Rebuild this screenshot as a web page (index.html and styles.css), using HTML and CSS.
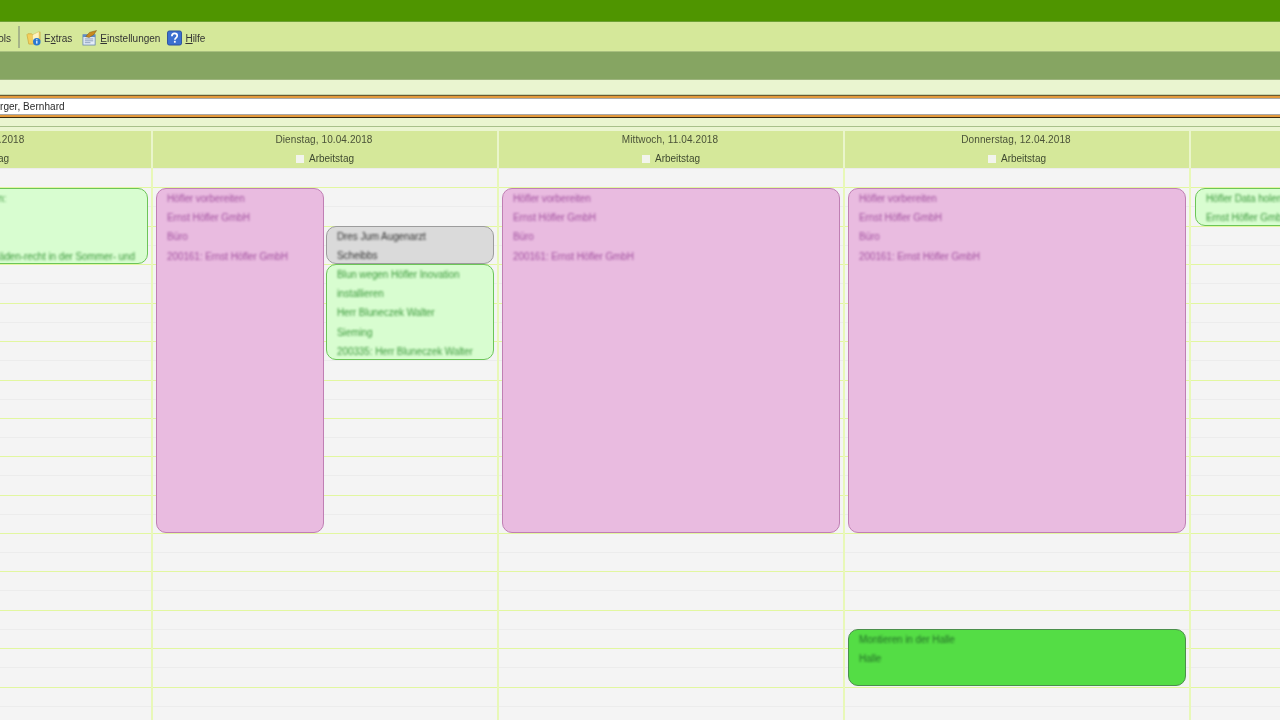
FILE: index.html
```html
<!DOCTYPE html>
<html lang="de">
<head>
<meta charset="utf-8">
<title>Kalender</title>
<link rel="stylesheet" href="styles.css">
</head>
<body>
<div class="titlebar"></div>
<div class="toolbar">
  <span class="tb-clip"><span class="tb-label">Tools</span></span>
  <span class="tb-sep"></span>
  <span class="tb-item tb-extras">
    <svg class="tb-icon" viewBox="0 0 16 17"><path d="M1 5l1-1h4l1 1h2l6-3v9l-3 4H3z" fill="#f3cf5c" stroke="#c9a43a" stroke-width=".7"/><path d="M7 5l7-3.500V9l-7 3z" fill="#fdf3c0" stroke="#d8b850" stroke-width=".5"/><circle cx="11.500" cy="12.500" r="4" fill="#2a78d0"/><rect x="10.900" y="11.500" width="1.300" height="3" fill="#fff"/><rect x="10.900" y="9.800" width="1.300" height="1.100" fill="#fff"/></svg>
    <span class="tb-label">E<u>x</u>tras</span>
  </span>
  <span class="tb-item tb-settings">
    <svg class="tb-icon" viewBox="0 0 16 17"><rect x="1" y="5" width="13" height="11" fill="#e4edf8" stroke="#5d7fae" stroke-width=".8"/><rect x="1" y="5" width="13" height="2.500" fill="#5d8fc8"/><path d="M3 9.500h9M3 11.500h9M3 13.500h6" stroke="#7d93b3" stroke-width=".9"/><path d="M4 7l4-4.500 7.500-2-3 4.500-5 3z" fill="#c98a1e" stroke="#7d5410" stroke-width=".5"/></svg>
    <span class="tb-label"><u>E</u>instellungen</span>
  </span>
  <span class="tb-item tb-help">
    <svg class="tb-icon" viewBox="0 0 16 17"><rect x=".5" y="1" width="15" height="15" rx="2" fill="#3b6fd0" stroke="#2a4f9c"/><path d="M5.200 6.500c0-2 1.300-3 2.900-3s2.800 1 2.800 2.500c0 2.200-2.500 2.300-2.500 4.300" fill="none" stroke="#fff" stroke-width="1.800"/><rect x="7.400" y="11.500" width="1.900" height="2" fill="#fff"/></svg>
    <span class="tb-label"><u>H</u>ilfe</span>
  </span>
</div>
<div class="section-bar"></div>
<div class="pale-strip"></div>
<div class="resource">
  <div class="resource-name">rger, Bernhard</div>
</div>
<div class="pale-strip pale-strip-low"></div>
<div class="calendar">
  <section class="day day-first">
    <header class="day-head"><div class="day-date">Montag, 09.04.2018</div><div class="day-work"><span class="check"></span>Arbeitstag</div></header>
    <div class="day-body">
      <article class="event green ev-mon">
        <p>Höfler Garten: Wartung und Pflege planen:</p><p>&nbsp;</p><p>&nbsp;</p>
        <p>Höfler Halle + Tore: Wartung der Fensterläden-recht in der Sommer- und</p>
      </article>
    </div>
  </section>
  <section class="day">
    <header class="day-head"><div class="day-date">Dienstag, 10.04.2018</div><div class="day-work"><span class="check"></span>Arbeitstag</div></header>
    <div class="day-body">
      <article class="event pink ev-half-left ev-long"><p>Höfler vorbereiten</p><p>Ernst Höfler GmbH</p><p>Büro</p><p>200161: Ernst Höfler GmbH</p></article>
      <article class="event grey ev-dr"><p>Dres Jum Augenarzt</p><p>Scheibbs</p></article>
      <article class="event green ev-blun"><p>Blun wegen Höfler Inovation</p><p>installieren</p><p>Herr Bluneczek Walter</p><p>Sieming</p><p>200335: Herr Bluneczek Walter</p></article>
    </div>
  </section>
  <section class="day">
    <header class="day-head"><div class="day-date">Mittwoch, 11.04.2018</div><div class="day-work"><span class="check"></span>Arbeitstag</div></header>
    <div class="day-body">
      <article class="event pink ev-long ev-full"><p>Höfler vorbereiten</p><p>Ernst Höfler GmbH</p><p>Büro</p><p>200161: Ernst Höfler GmbH</p></article>
    </div>
  </section>
  <section class="day">
    <header class="day-head"><div class="day-date">Donnerstag, 12.04.2018</div><div class="day-work"><span class="check"></span>Arbeitstag</div></header>
    <div class="day-body">
      <article class="event pink ev-long ev-full"><p>Höfler vorbereiten</p><p>Ernst Höfler GmbH</p><p>Büro</p><p>200161: Ernst Höfler GmbH</p></article>
      <article class="event strong ev-full ev-halle"><p>Montieren in der Halle</p><p>Halle</p></article>
    </div>
  </section>
  <section class="day day-last">
    <header class="day-head"></header>
    <div class="day-body">
      <article class="event green ev-fri"><p>Höfler Data holen</p><p>Ernst Höfler GmbH</p></article>
    </div>
  </section>
</div>
</body>
</html>
```
FILE: styles.css
```css
* { box-sizing: border-box; }
html, body { margin: 0; height: 100%; }
body {
  width: 1280px; height: 720px; overflow: hidden; background: #f4f4f4;
  font-family: "Liberation Sans", Arial, sans-serif; font-size: 10px; color: #333;
  display: flex; flex-direction: column;
}
p { margin: 0; }
.titlebar { height: 22px; background: #4f9500; border-bottom: 1px solid #6da034; flex: none; }
.toolbar {
  height: 30px; flex: none; background: #d5e89a; border-bottom: 1px solid #a9c07f;
  display: flex; align-items: center; padding-top: 2px; filter: blur(.3px);
}
.tb-clip { width: 11px; overflow: hidden; display: flex; justify-content: flex-end; }
.tb-sep { width: 2px; height: 22px; background: #a5b488; margin: -2px 6px 0 7px; }
.tb-item { display: flex; align-items: center; gap: 3px; }
.tb-settings { margin-left: 10px; }
.tb-help { margin-left: 7px; }
.tb-icon { width: 15px; height: 16px; flex: none; }
.tb-label { color: #333; white-space: nowrap; padding-top: 1px; }
.section-bar { height: 28px; flex: none; background: #86a562; border-bottom: 1px solid #9cb37c; }
.pale-strip { height: 15px; flex: none; background: #eaf5d0; border-bottom: 1px solid #c5d4ab; }
.pale-strip-low { height: 9px; border-bottom: 1px solid #a8c08a; }
.resource {
  height: 23px; flex: none; background: #fff; display: flex; align-items: center;
  border-top: 1px solid #6b5a30; border-bottom: 1px solid #3a2a10;
  box-shadow: inset 0 2px 0 #e39a3c, inset 0 3px 0 #a9a9a9, inset 0 -2px 0 #e39a3c, inset 0 -3px 0 #a9a9a9;
}
.resource-name { color: #2a2a2a; letter-spacing: .05px; filter: blur(.3px); }
.calendar { flex: 1; display: flex; min-height: 0; padding-top: 4px; background: #eaf5d0; }
.day { width: 346px; flex: none; display: flex; flex-direction: column; }
.day-first { width: 153px; }
.day-last { width: 89px; }
.day-head {
  height: 37px; flex: none; background: #d5e89a; border-right: 2px solid #eaf5cb; text-align: center;
  overflow: hidden; filter: blur(.3px);
}
.day-first .day-date, .day-first .day-work { width: 346px; margin-left: -193px; }
.day-date { line-height: 17px; padding-right: 2px; white-space: nowrap; color: #4a5238; letter-spacing: .1px; }
.day-work { line-height: 20px; padding-top: 1px; display: flex; justify-content: center; align-items: center; gap: 5px; color: #3f4a30; white-space: nowrap; }
.check { width: 8px; height: 8px; background: #f2f4ec; display: block; }
.day-body {
  flex: 1; position: relative; overflow: hidden; border-right: 2px solid #e8f8b8;
  background-color: #f4f4f4;
  background-size: 100% 384px;
  background-image: linear-gradient(to bottom,
    #ececec 0 1px, transparent 1px 19px, #e2f7a0 19px 20px, transparent 20px 38px,
    #ececec 38px 39px, transparent 39px 58px, #e2f7a0 58px 59px, transparent 59px 77px,
    #ececec 77px 78px, transparent 78px 96px, #e2f7a0 96px 97px, transparent 97px 115px,
    #ececec 115px 116px, transparent 116px 135px, #e2f7a0 135px 136px, transparent 136px 154px,
    #ececec 154px 155px, transparent 155px 173px, #e2f7a0 173px 174px, transparent 174px 192px,
    #ececec 192px 193px, transparent 193px 212px, #e2f7a0 212px 213px, transparent 213px 231px,
    #ececec 231px 232px, transparent 232px 250px, #e2f7a0 250px 251px, transparent 251px 269px,
    #ececec 269px 270px, transparent 270px 288px, #e2f7a0 288px 289px, transparent 289px 307px,
    #ececec 307px 308px, transparent 308px 327px, #e2f7a0 327px 328px, transparent 328px 346px,
    #ececec 346px 347px, transparent 347px 365px, #e2f7a0 365px 366px, transparent 366px 384px);
}
.day-last .day-head, .day-last .day-body { border-right: 0; }
.event {
  position: absolute; border: 1px solid; border-radius: 10px; padding: 0 10px;
  line-height: 19.200px; letter-spacing: -.1px; overflow: hidden; white-space: nowrap;
}
.event p { filter: blur(.85px); }
.pink { background: #e9bbe0; border-color: #c07fb4; color: #a352a0; }
.green { background: #d8fdd0; border-color: #6cc558; color: #3d9a3d; }
.grey { background: #dadada; border-color: #9c9c9c; color: #333; }
.strong { background: #54dd45; border-color: #4b8f4b; color: #26702a; }
.ev-long { top: 20px; height: 345px; }
.ev-full { left: 3px; width: 338px; }
.ev-half-left { left: 3px; width: 168px; }
.ev-mon { top: 20px; height: 76px; left: -190px; width: 338px; }
.ev-dr { top: 58px; height: 38px; left: 173px; width: 168px; }
.ev-blun { top: 96px; height: 96px; left: 173px; width: 168px; }
.ev-halle { top: 461px; height: 57px; }
.ev-fri { top: 20px; height: 38px; left: 4px; width: 338px; }
```
